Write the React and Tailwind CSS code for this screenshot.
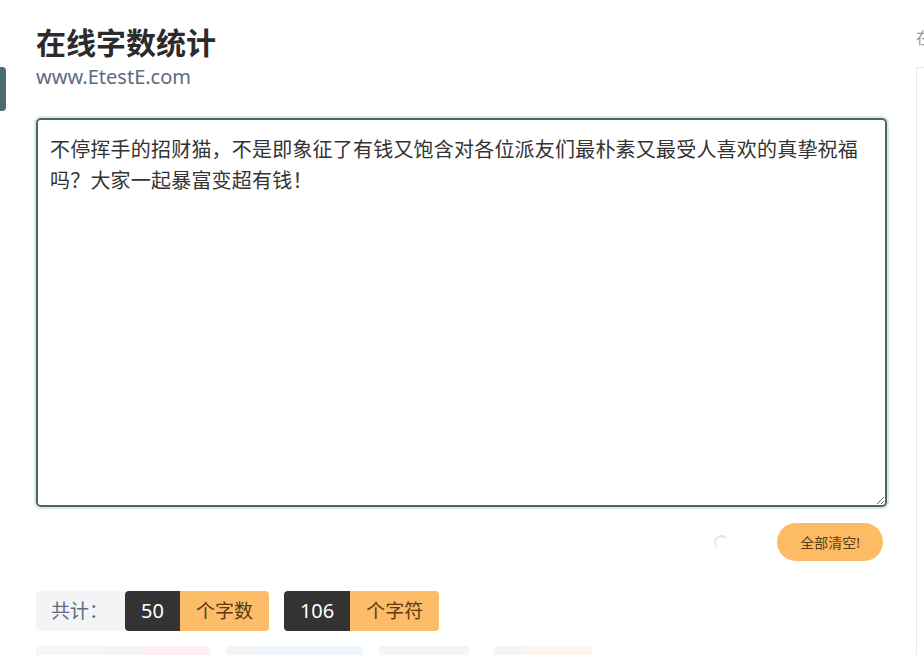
import React from 'react';

const text =
  '不停挥手的招财猫，不是即象征了有钱又饱含对各位派友们最朴素又最受人喜欢的真挚祝福吗？大家一起暴富变超有钱！';

function Stat({ value, label }) {
  return (
    <div className="flex h-10 overflow-hidden rounded">
      <div className="flex items-center bg-[#333333] px-4 text-[20px] text-white">{value}</div>
      <div className="flex items-center bg-[#fdbd68] px-4 text-[19px] text-[#5b3b14]">{label}</div>
    </div>
  );
}

export default function App() {
  return (
    <div
      className="relative h-[655px] w-[924px] overflow-hidden bg-white text-[#333]"
      style={{ fontFamily: '"Noto Sans", "Noto Sans CJK SC", sans-serif' }}
    >
      <div className="absolute left-0 top-[67px] h-[44px] w-[6px] rounded-r-sm bg-[#4b6b70]" />

      <div className="flex">
        <div className="w-[887px] shrink-0 pl-[36px]">
          <h1 className="mt-[24px] text-[30px] font-bold leading-[38px] text-[#2b2b2b]">在线字数统计</h1>
          <div className="mt-[2px] text-[20px] leading-[26px] text-[#5d6b82]">www.EtestE.com</div>

          <div className="mt-[28px] h-[389px] rounded-[5px] border-2 border-[#4d6565] shadow-[0_0_0_2px_#dfe6e6]">
            <textarea
              className="block h-full w-full resize-y rounded-[4px] bg-white px-[12px] pt-[14px] text-[20px] leading-[31px] tracking-[0.2px] text-[#333] outline-none"
              defaultValue={text}
            />
          </div>

          <div className="mt-[16px] flex h-[38px] items-center justify-end">
            <div className="mr-[48px] h-[15px] w-[15px] rounded-full border-2 border-transparent border-l-[#e6e6e6] border-t-[#e6e6e6]" />
            <button className="mr-[4px] h-[38px] rounded-full bg-[#fdbb63] px-[23px] text-[14px] text-[#5b3b14]">
              全部清空!
            </button>
          </div>

          <div className="mt-[30px] flex items-center gap-[15px]">
            <div className="flex">
              <div className="flex h-10 items-center rounded-l bg-[#f3f4f6] pl-[15px] pr-[17px] text-[19px] text-[#5d6b82]">
                共计：
              </div>
              <Stat value="50" label="个字数" />
            </div>
            <Stat value="106" label="个字符" />
          </div>

          <div className="mt-[15px] flex gap-[16px] opacity-70">
            <div className="flex h-10 overflow-hidden rounded">
              <div className="w-[64px] bg-[#f3f3f3]" />
              <div className="w-[42px] bg-[#f1f1f1]" />
              <div className="w-[68px] bg-[#fde8ec]" />
            </div>
            <div className="flex h-10 overflow-hidden rounded">
              <div className="w-[30px] bg-[#f1f1f1]" />
              <div className="w-[107px] bg-[#e9f1fa]" />
            </div>
            <div className="flex h-10 overflow-hidden rounded">
              <div className="w-[90px] bg-[#f2f2f2]" />
            </div>
            <div className="ml-[8px] flex h-10 overflow-hidden rounded">
              <div className="w-[32px] bg-[#f2f2f2]" />
              <div className="w-[67px] bg-[#fdf3e6]" />
            </div>
          </div>
        </div>

        <div className="ml-[29px] flex-1">
          <div className="mt-[26px] text-[16px] leading-[24px] text-[#999]">在</div>
          <div className="mt-[17px] h-[600px] border-l border-t border-[#e8e8e8]" />
        </div>
      </div>
    </div>
  );
}
